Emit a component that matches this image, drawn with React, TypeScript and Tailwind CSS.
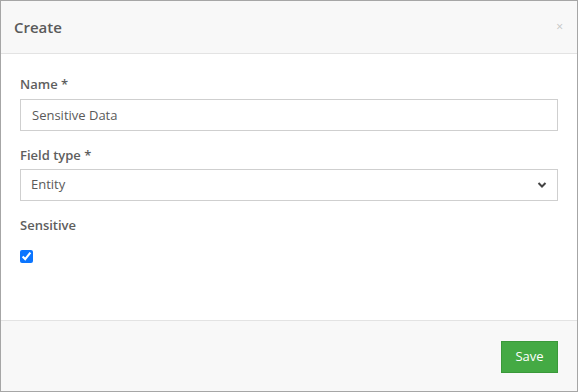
export default function App() {
  return (
    <div className="w-[578px] h-[392px] border border-[#a6a6a6] bg-white flex flex-col font-['Open_Sans',sans-serif] text-[#555]">
      <div className="h-[53px] shrink-0 bg-[#f8f8f8] border-b border-[#e3e3e3] flex items-center justify-between pl-[13px] pr-[14px]">
        <h2 className="text-[15px] font-semibold text-[#5a5a5a] leading-none">Create</h2>
        <button className="text-[#c4c4c4] text-[12px] leading-none">×</button>
      </div>

      <div className="flex-1 px-[19px] pt-[20px]">
        <label className="block text-[13px] font-semibold text-[#5e5e5e] leading-[20px] mb-[5px]">Name *</label>
        <input
          className="block w-full h-[32px] border border-[#cfcfcf] px-[11px] text-[13px] text-[#5a5a5a] outline-none"
          defaultValue="Sensitive Data"
        />
        <label className="block text-[13px] font-semibold text-[#5e5e5e] leading-[20px] mt-[14px] mb-[4px]">Field type *</label>
        <div className="relative">
          <select className="block w-full h-[32px] border border-[#cfcfcf] px-[10px] text-[13px] text-[#5a5a5a] appearance-none bg-white outline-none">
            <option>Entity</option>
          </select>
          <svg className="absolute right-[11px] top-[12px] w-[10px] h-[8px]" viewBox="0 0 10 8">
            <path d="M1.5 2 L5 5.5 L8.5 2" fill="none" stroke="#444" strokeWidth="2" />
          </svg>
        </div>
        <label className="block text-[13px] font-semibold text-[#5e5e5e] leading-[20px] mt-[14px] mb-[15px]">Sensitive</label>
        <input type="checkbox" defaultChecked className="block w-[13px] h-[13px] accent-[#0b75ff]" />
      </div>

      <div className="h-[71px] shrink-0 bg-[#f8f8f8] border-t border-[#e3e3e3] flex items-center justify-end pr-[19px]">
        <button className="w-[57px] h-[32px] bg-[#44aa44] border border-[#3a993a] text-white text-[13px] mt-[1px]">Save</button>
      </div>
    </div>
  );
}
